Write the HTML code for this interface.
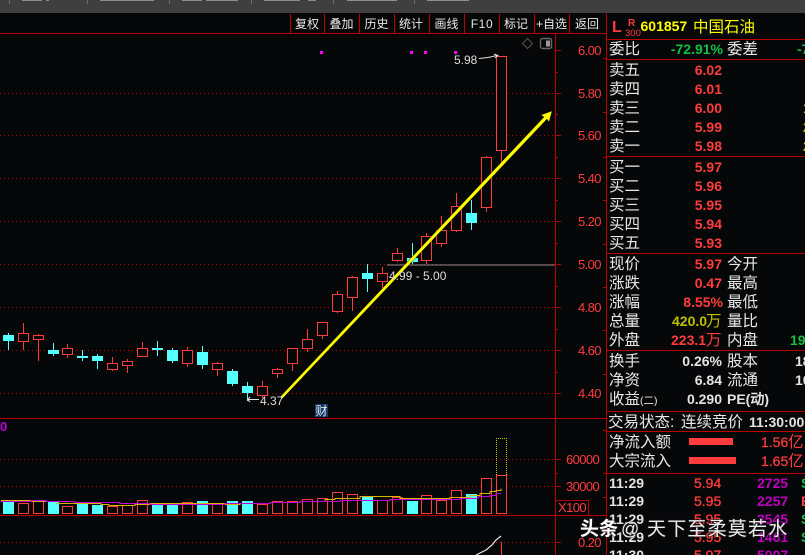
<!DOCTYPE html>
<html><head><meta charset="utf-8"><style>
html,body{margin:0;padding:0;background:#060709;width:805px;height:555px;overflow:hidden}
svg{display:block}
text{white-space:pre}
.c{font-family:"Liberation Sans","WenQuanYi Zen Hei","Noto Sans CJK SC",sans-serif;font-size:15.5px;fill:#e8e8e8}
.t{font-family:"Liberation Sans","WenQuanYi Zen Hei","Noto Sans CJK SC",sans-serif;font-size:12.5px;fill:#e8e8e8}
.n{font-family:"Liberation Sans","WenQuanYi Zen Hei",sans-serif;font-size:14px;font-weight:bold;fill:#ff3c3c}
.a{font-family:"Liberation Sans",sans-serif;font-size:13px;letter-spacing:-.6px;fill:#ff3c3c}
.r{text-anchor:end}
.w{fill:#e4e4e4}.g{fill:#10c040}.y{fill:#c0c000}.m{fill:#c000c0}
</style></head><body>
<svg width="805" height="555" viewBox="0 0 805 555" xmlns="http://www.w3.org/2000/svg">
<rect width="805" height="555" fill="#060709"/>
<!-- top bar -->
<rect width="805" height="13" fill="#3f3f3f"/>
<g fill="#6a6a6a" shape-rendering="crispEdges"><rect x="9" width="1" height="4"/><rect x="87" width="1" height="4"/><rect x="169" width="1" height="4"/><rect x="251" width="1" height="4"/><rect x="333" width="1" height="4"/><rect x="414" width="1" height="4"/></g>
<g fill="#8c8c8c" shape-rendering="crispEdges"><rect x="22" width="20" height="1"/><rect x="46" width="3" height="1"/><rect x="100" width="54" height="1"/><rect x="182" width="20" height="1"/><rect x="206" width="32" height="1"/><rect x="264" width="36" height="1"/><rect x="308" width="8" height="1"/><rect x="347" width="50" height="1"/><rect x="427" width="42" height="1"/></g>
<!-- grid -->
<g stroke="#c00000" stroke-width="1" stroke-dasharray="1 3" fill="none" shape-rendering="crispEdges">
<path d="M0 93.5H555M0 135.5H555M0 178.5H555M0 221.5H555M0 264.5H555M0 307.5H555M0 350.5H555M0 393.5H555M0 459.5H555M0 486.5H555M0 542.5H555"/>
</g>
<path d="M387 265H555" stroke="#8a8a8a" stroke-width="1" shape-rendering="crispEdges"/>
<!-- frame lines -->
<g stroke="#bc0000" stroke-width="1" fill="none" shape-rendering="crispEdges">
<path d="M0 33.5H606M0 418.5H606M0 515.5H606"/>
<path d="M555.5 33V555M606.5 13V555"/>
<path d="M290.5 14V33M324.5 14V33M359.5 14V33M394.5 14V33M429.5 14V33M464.5 14V33M499.5 14V33M534.5 14V33M569.5 14V33"/>
<path d="M555 50.5H561M555 72.5H558M555 93.5H561M555 114.5H558M555 135.5H561M555 157.5H558M555 178.5H561M555 200.5H558M555 221.5H561M555 243.5H558M555 264.5H561M555 286.5H558M555 307.5H561M555 329.5H558M555 350.5H561M555 372.5H558M555 393.5H561"/>
<path d="M555 459.5H561M555 473.5H558M555 486.5H561M555 500.5H558M555 542.5H561"/>
<path d="M603 58.5H606M603 112.5H606M603 157.5H606M603 200.5H606M603 244.5H606M603 287.5H606M603 330.5H606M603 374.5H606M603 430.5H606M603 473.5H606M603 497.5H606"/>
<path d="M607 39.5H805M607 59.5H805M607 156.5H805M607 253.5H805M607 350.5H805M607 411.5H805M607 431.5H805M607 473.5H805"/>
<path d="M555.5 500.5H588.5V515"/>
</g>
<!-- toolbar -->
<g class="t" text-anchor="middle" style="font-size:12px">
<text x="307" y="28">复权</text><text x="341.5" y="28">叠加</text><text x="376.5" y="28">历史</text><text x="411" y="28">统计</text><text x="446.5" y="28">画线</text><text x="482" y="28" letter-spacing=".6">F10</text><text x="516" y="28">标记</text><text x="551.5" y="28">+自选</text><text x="587" y="28">返回</text>
</g>
<!-- icons -->
<path d="M527.5 38.5L532.5 43.5L527.5 48.5L522.5 43.5Z" fill="none" stroke="#555" stroke-width="1"/>
<rect x="540.5" y="38.5" width="11" height="10" rx="2" fill="none" stroke="#666" stroke-width="1.4"/>
<rect x="546" y="40.5" width="4" height="6" fill="#999" shape-rendering="crispEdges"/>
<g fill="#ff00ff" shape-rendering="crispEdges"><rect x="320" y="51" width="3" height="3"/><rect x="410" y="51" width="3" height="3"/><rect x="424" y="51" width="3" height="3"/><rect x="454" y="51" width="3" height="3"/></g>
<!-- candle wicks -->
<path shape-rendering="crispEdges" stroke="#ff3c3c" stroke-width="1" fill="none" d="M23.5 323V350M38.5 334V361M67.5 344V358M112.5 357V371M127.5 359V373M142.5 342V357M187.5 347V367M217.5 362V376M262.5 381V398M277.5 368V378M292.5 348V371M307.5 329V352M322.5 322V339M337.5 291V313M352.5 276V311M382.5 267V288M397.5 248V262M426.5 233V264M441.5 216V247M456.5 193V232M486.5 156V212M501.5 56V165"/>
<path shape-rendering="crispEdges" stroke="#54ffff" stroke-width="1" fill="none" d="M8.5 333V350M53.5 343V356M82.5 350V361M97.5 354V369M157.5 341V356M172.5 348V363M202.5 346V369M232.5 369V386M247.5 382V401M367.5 264V292M412.5 243V264M471.5 200V230"/>
<!-- red bodies -->
<path shape-rendering="crispEdges" stroke="#ff3c3c" stroke-width="1" fill="#060709" d="M18.5 333.5h10v8h-10zM33.5 335.5h10v4h-10zM62.5 348.5h10v6h-10zM107.5 363.5h10v6h-10zM122.5 361.5h10v4h-10zM137.5 348.5h10v8h-10zM182.5 350.5h10v13h-10zM212.5 363.5h10v6h-10zM257.5 386.5h10v9h-10zM272.5 369.5h10v4h-10zM287.5 348.5h10v15h-10zM302.5 339.5h10v9h-10zM317.5 322.5h10v13h-10zM332.5 294.5h10v17h-10zM347.5 277.5h10v20h-10zM377.5 273.5h10v8h-10zM392.5 253.5h10v7h-10zM421.5 236.5h10v24h-10zM436.5 230.5h10v13h-10zM451.5 206.5h10v24h-10zM481.5 157.5h10v50h-10zM496.5 56.5h10v94h-10z"/>
<!-- cyan bodies -->
<g fill="#54ffff" shape-rendering="crispEdges"><rect x="3" y="335" width="11" height="6"/><rect x="48" y="350" width="11" height="4"/><rect x="77" y="356" width="11" height="2"/><rect x="92" y="356" width="11" height="5"/><rect x="152" y="348" width="11" height="2"/><rect x="167" y="350" width="11" height="11"/><rect x="197" y="352" width="11" height="13"/><rect x="227" y="371" width="11" height="13"/><rect x="242" y="386" width="11" height="7"/><rect x="362" y="273" width="11" height="6"/><rect x="407" y="258" width="11" height="4"/><rect x="466" y="213" width="11" height="10"/></g>
<!-- volume -->
<g fill="#54ffff" shape-rendering="crispEdges"><rect x="3" y="502" width="11" height="12"/><rect x="48" y="502" width="11" height="12"/><rect x="77" y="503" width="11" height="11"/><rect x="92" y="505" width="11" height="9"/><rect x="152" y="504" width="11" height="10"/><rect x="167" y="505" width="11" height="9"/><rect x="197" y="501" width="11" height="13"/><rect x="227" y="501" width="11" height="13"/><rect x="242" y="501" width="11" height="13"/><rect x="362" y="497" width="11" height="17"/><rect x="407" y="501" width="11" height="13"/><rect x="466" y="494" width="11" height="20"/></g>
<path shape-rendering="crispEdges" stroke="#ff3c3c" stroke-width="1" fill="#060709" d="M18.5 503.5h10v10h-10zM33.5 500.5h10v13h-10zM62.5 506.5h10v7h-10zM107.5 506.5h10v7h-10zM122.5 505.5h10v8h-10zM137.5 500.5h10v13h-10zM182.5 502.5h10v11h-10zM212.5 504.5h10v9h-10zM257.5 504.5h10v9h-10zM272.5 501.5h10v12h-10zM287.5 501.5h10v12h-10zM302.5 499.5h10v14h-10zM317.5 498.5h10v15h-10zM332.5 492.5h10v21h-10zM347.5 494.5h10v19h-10zM377.5 500.5h10v13h-10zM392.5 497.5h10v16h-10zM421.5 495.5h10v18h-10zM436.5 500.5h10v13h-10zM451.5 490.5h10v23h-10zM481.5 478.5h10v35h-10zM496.5 475.5h10v38h-10z"/>
<path d="M496.5 475V438.5H506.5V475" fill="none" stroke="#c8c800" stroke-width="1" stroke-dasharray="1 1" shape-rendering="crispEdges"/>
<!-- MA lines -->
<path shape-rendering="crispEdges" fill="none" stroke="#d8b400" stroke-width="1" d="M1 500.5H31V501.5H57V503.5H64V503.5H101V504.5H109V505.5H135V504.5H150V503.5H180V503.5H225V504.5H240V503.5H270V502.5H300V501.5H325V499.5H335V498.5H360V496.5H400V498.5H435V498.5H450V497.5H470V495.5H480V493.5H490V491.5H496V490.5H501V488.5"/>
<path shape-rendering="crispEdges" fill="none" stroke="#c000d8" stroke-width="1.2" d="M1 501.5H31V500.5H46V501.5H75V502.5H120V503.5H150V504.5H225V503.5H270V502.5H300V501.5H340V500.5H390V499.5H460V498.5H478V496.5H490V495.5H496V493.5H501"/>
<!-- bottom curve -->
<path d="M476 555L486 550L492 545L496 540L501 536" fill="none" stroke="#e8e8e8" stroke-width="1.2"/>
<path d="M501.5 542V555" stroke="#ff3c3c" stroke-width="1" shape-rendering="crispEdges"/>
<!-- arrow -->
<polygon points="280,397 282,399 547,119 549,122 552,111 541,115 544,117" fill="#ffff00" stroke="#1b1b00" stroke-width=".4"/>
<!-- annotations -->
<g font-family="Liberation Sans,sans-serif" font-size="12" fill="#dcdcdc">
<text x="454" y="64">5.98</text>
<text x="260" y="405">4.37</text>
<text x="389" y="280">4.99 - 5.00</text>
</g>
<path d="M479 58.5L488 57.5L497 55.5M494 54L498 55.5L495 58" fill="none" stroke="#e0e0e0" stroke-width="1"/>
<path d="M259 399.5H248M250 397L247.5 399.5L250 402" fill="none" stroke="#e0e0e0" stroke-width="1"/>
<rect x="315" y="404" width="13" height="13" fill="#123a6c"/>
<text class="t" x="315.5" y="415" style="font-size:12px">财</text>
<text font-family="Liberation Sans,sans-serif" font-size="13" font-weight="bold" fill="#c000d8" x="0" y="431">0</text>
<!-- axis labels -->
<g class="a">
<text x="578" y="55">6.00</text><text x="578" y="98">5.80</text><text x="578" y="140">5.60</text><text x="578" y="183">5.40</text><text x="578" y="226">5.20</text><text x="578" y="269">5.00</text><text x="578" y="312">4.80</text><text x="578" y="355">4.60</text><text x="578" y="398">4.40</text>
<text x="566" y="464">60000</text><text x="566" y="491">30000</text><text x="558" y="512">X100</text><text x="578" y="547">0.20</text>
</g>
<!-- right panel header -->
<text x="612" y="32" font-family="Liberation Sans,sans-serif" font-size="16" font-weight="bold" fill="#ff3c3c">L</text>
<text x="628" y="26" font-family="Liberation Sans,sans-serif" font-size="10" font-weight="bold" fill="#ff3c3c">R</text>
<text x="625" y="36" font-family="Liberation Sans,sans-serif" font-size="9.5" fill="#ff3c3c">300</text>
<text x="640.5" y="31" font-family="Liberation Sans,sans-serif" font-size="14" font-weight="bold" fill="#ffff00">601857</text>
<text class="c" x="693" y="32" style="fill:#ffff00">中国石油</text>
<!-- left labels -->
<g class="c">
<text x="609" y="54">委比</text><text x="727" y="54">委差</text>
<text x="609" y="75">卖五</text><text x="609" y="94">卖四</text><text x="609" y="113">卖三</text><text x="609" y="132">卖二</text><text x="609" y="151">卖一</text>
<text x="609" y="172">买一</text><text x="609" y="191">买二</text><text x="609" y="210">买三</text><text x="609" y="229">买四</text><text x="609" y="248">买五</text>
<text x="609" y="269">现价</text><text x="727" y="269">今开</text>
<text x="609" y="288">涨跌</text><text x="727" y="288">最高</text>
<text x="609" y="307">涨幅</text><text x="727" y="307">最低</text>
<text x="609" y="326">总量</text><text x="727" y="326">量比</text>
<text x="609" y="345">外盘</text><text x="727" y="345">内盘</text>
<text x="609" y="366">换手</text><text x="727" y="366">股本</text>
<text x="609" y="385">净资</text><text x="727" y="385">流通</text>
<text x="609" y="404">收益<tspan font-size="10.5">(二)</tspan></text>
<text x="608" y="427">交易状态:</text><text x="681" y="427">连续竞价</text>
<text x="609" y="447">净流入额</text><text x="609" y="466">大宗流入</text>
</g>
<!-- numbers -->
<g class="n r">
<text x="723" y="54" class="n r g">-72.91%</text>
<text x="722" y="75">6.02</text><text x="722" y="94">6.01</text><text x="722" y="113">6.00</text><text x="722" y="132">5.99</text><text x="722" y="151">5.98</text>
<text x="722" y="172">5.97</text><text x="722" y="191">5.96</text><text x="722" y="210">5.95</text><text x="722" y="229">5.94</text><text x="722" y="248">5.93</text>
<text x="722" y="269">5.97</text><text x="722" y="288">0.47</text><text x="723" y="307">8.55%</text>
<text x="722" y="366" class="n r w">0.26%</text><text x="722" y="385" class="n r w">6.84</text><text x="722" y="404" class="n r w">0.290</text>
</g>
<text class="n y" x="672" y="326">420.0</text><text class="c" x="706" y="326" style="fill:#c0c000">万</text>
<text class="n" x="671" y="345">223.1</text><text class="c" x="706" y="345" style="fill:#ff3c3c">万</text>
<text class="n w" x="727" y="404">PE(动)</text>
<text class="n w" x="749" y="427">11:30:00</text>
<text class="n g" x="797" y="54">-7</text>
<text class="n y" x="803" y="113">1</text><text class="n y" x="803" y="132">2</text><text class="n y" x="803" y="151">2</text>
<text class="n g" x="790" y="345">19</text>
<text class="n w" x="795" y="366">18</text><text class="n w" x="795" y="385">10</text>
<!-- flow bars -->
<g fill="#ff3c3c" shape-rendering="crispEdges"><rect x="689" y="438" width="44" height="7"/><rect x="689" y="457" width="47" height="7"/></g>
<text x="761" y="447" font-family="Liberation Sans,sans-serif" font-size="14" fill="#ff3c3c" stroke="#ff3c3c" stroke-width=".25">1.56</text><text class="c" x="788" y="447" style="fill:#ff3c3c">亿</text>
<text x="761" y="466" font-family="Liberation Sans,sans-serif" font-size="14" fill="#ff3c3c" stroke="#ff3c3c" stroke-width=".25">1.65</text><text class="c" x="788" y="466" style="fill:#ff3c3c">亿</text>
<!-- ticks -->
<g class="n w"><text x="609" y="488">11:29</text><text x="609" y="506">11:29</text><text x="609" y="524">11:29</text><text x="609" y="542">11:29</text><text x="609" y="560">11:30</text></g>
<g font-family="Liberation Sans,sans-serif" font-size="14" fill="#ff3c3c" stroke="#ff3c3c" stroke-width=".3"><text x="694" y="488">5.94</text><text x="694" y="506">5.95</text><text x="694" y="524">5.95</text><text x="694" y="542">5.95</text><text x="694" y="560">5.97</text></g>
<g font-family="Liberation Sans,sans-serif" font-size="14" font-weight="bold" fill="#c000c0"><text x="757" y="488">2725</text><text x="757" y="506">2257</text><text x="757" y="524">3545</text><text x="757" y="542">1461</text><text x="757" y="560">5007</text></g>
<g font-family="Liberation Sans,sans-serif" font-size="14" font-weight="bold"><text x="801" y="488" fill="#10c040">S</text><text x="801" y="506" fill="#ff3c3c">B</text><text x="801" y="524" fill="#10c040">S</text><text x="801" y="542" fill="#10c040">S</text></g>
<!-- watermark -->
<g font-family="Liberation Sans,&quot;Noto Sans CJK SC&quot;,sans-serif" fill="#fff" style="paint-order:stroke" stroke="#222" stroke-width="1.5" stroke-opacity=".55">
<text x="580" y="535" font-size="19" font-weight="bold">头条</text>
<text x="621" y="535" font-size="18" fill-opacity=".92">@</text>
<text x="647" y="535" font-size="19" letter-spacing="1.2" fill-opacity=".92">天下至柔莫若水</text>
</g>
</svg>
</body></html>
